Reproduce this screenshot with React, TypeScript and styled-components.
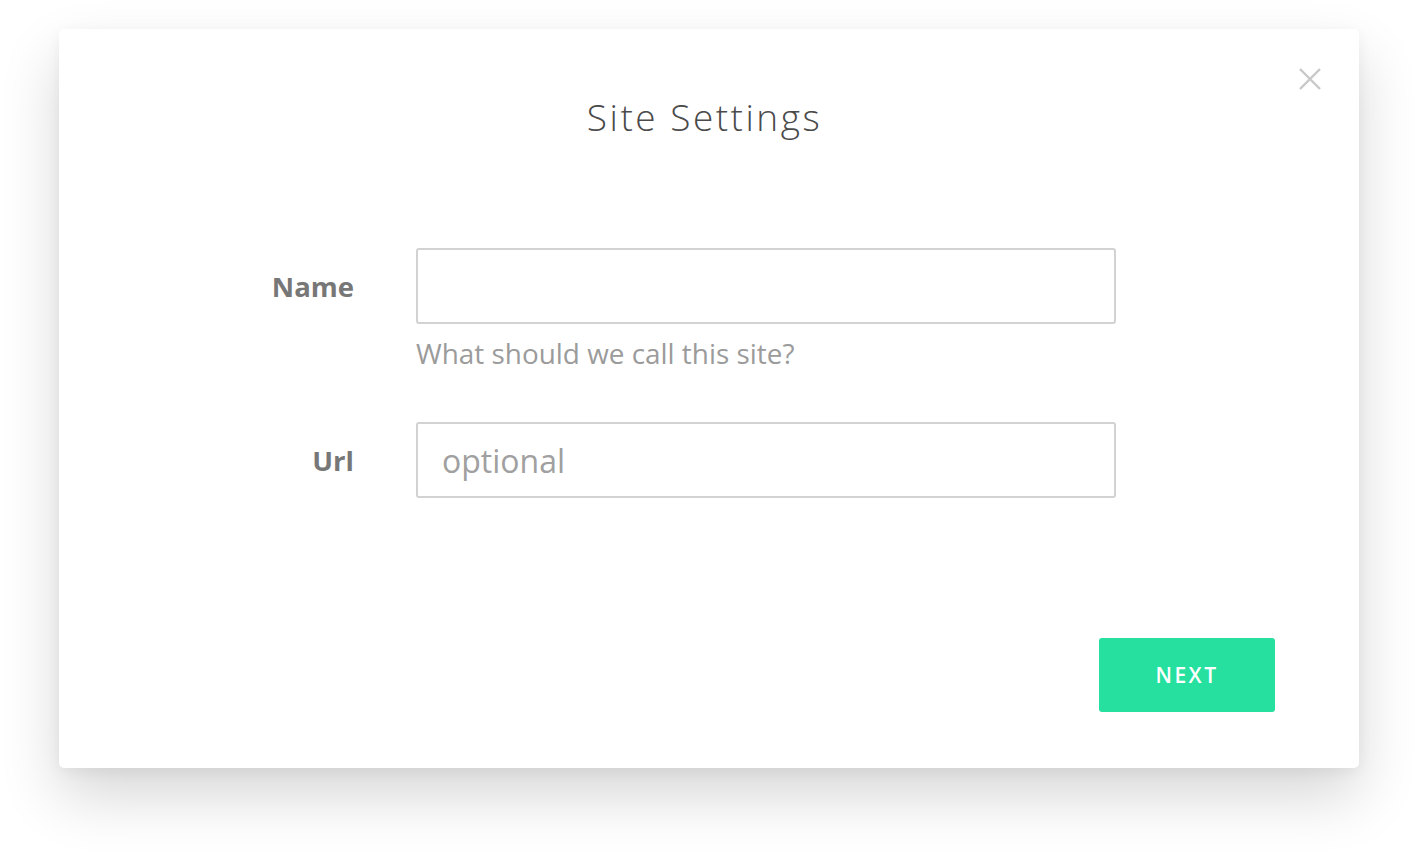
import styled, { createGlobalStyle } from "styled-components";

const GlobalStyle = createGlobalStyle`
  html, body {
    margin: 0;
    padding: 0;
    background: #ffffff;
    font-family: "Open Sans", "Liberation Sans", sans-serif;
  }
`;

const Page = styled.div`
  padding: 29px 0 0 59px;
  min-height: 857px;
  box-sizing: border-box;
`;

const Card = styled.div`
  position: relative;
  width: 1300px;
  box-sizing: border-box;
  background: #fff;
  border-radius: 5px;
  box-shadow: 0 28px 60px rgba(0, 0, 0, 0.16), 0 4px 14px rgba(0, 0, 0, 0.05);
  padding: 63px 84px 56px 0;
  display: flex;
  flex-direction: column;
`;

const Title = styled.h1`
  margin: 0;
  padding-left: 75px;
  text-align: center;
  font-weight: 300;
  font-size: 37px;
  line-height: 50px;
  letter-spacing: 2.5px;
  color: #4a4a4a;
`;

const CloseButton = styled.button`
  position: absolute;
  top: 37px;
  right: 36px;
  width: 26px;
  height: 26px;
  padding: 0;
  border: none;
  background: transparent;
  cursor: pointer;
  display: flex;
  align-items: center;
  justify-content: center;
`;

const Form = styled.form`
  margin-top: 106px;
  display: grid;
  grid-template-columns: 295px 700px;
  column-gap: 62px;
  align-items: center;
`;

const Label = styled.label`
  text-align: right;
  font-weight: 700;
  font-size: 27.5px;
  color: #777;
`;

const Input = styled.input`
  width: 100%;
  height: 76px;
  box-sizing: border-box;
  border: 2px solid #d2d2d2;
  border-radius: 3px;
  padding: 0 24px;
  font-family: inherit;
  font-size: 32px;
  color: #555;
  outline: none;
  &::placeholder {
    color: #a0a0a0;
  }
`;

const Hint = styled.div<{ $space: number }>`
  grid-column: 2;
  margin-top: 13px;
  margin-bottom: ${({ $space }) => $space}px;
  font-size: 27.9px;
  line-height: 32px;
  color: #9b9b9b;
`;

const Footer = styled.div`
  margin-top: 140px;
  display: flex;
  justify-content: flex-end;
`;

const NextButton = styled.button`
  width: 176px;
  height: 74px;
  border: none;
  border-radius: 3px;
  background: #25e09f;
  color: #fff;
  font-family: inherit;
  font-weight: 600;
  font-size: 21px;
  letter-spacing: 2.5px;
  cursor: pointer;
`;

export default function App() {
  return (
    <>
      <GlobalStyle />
      <Page>
        <Card>
          <CloseButton aria-label="Close">
            <svg width="24" height="24" viewBox="0 0 24 24">
              <path d="M2 2 L22 22 M22 2 L2 22" stroke="#c8c8c8" strokeWidth="2.4" />
            </svg>
          </CloseButton>
          <Title>Site Settings</Title>
          <Form onSubmit={(e) => e.preventDefault()}>
            <Label htmlFor="name">Name</Label>
            <Input id="name" />
            <Hint $space={53}>What should we call this site?</Hint>
            <Label htmlFor="url">Url</Label>
            <Input id="url" placeholder="optional" />
          </Form>
          <Footer>
            <NextButton>NEXT</NextButton>
          </Footer>
        </Card>
      </Page>
    </>
  );
}
